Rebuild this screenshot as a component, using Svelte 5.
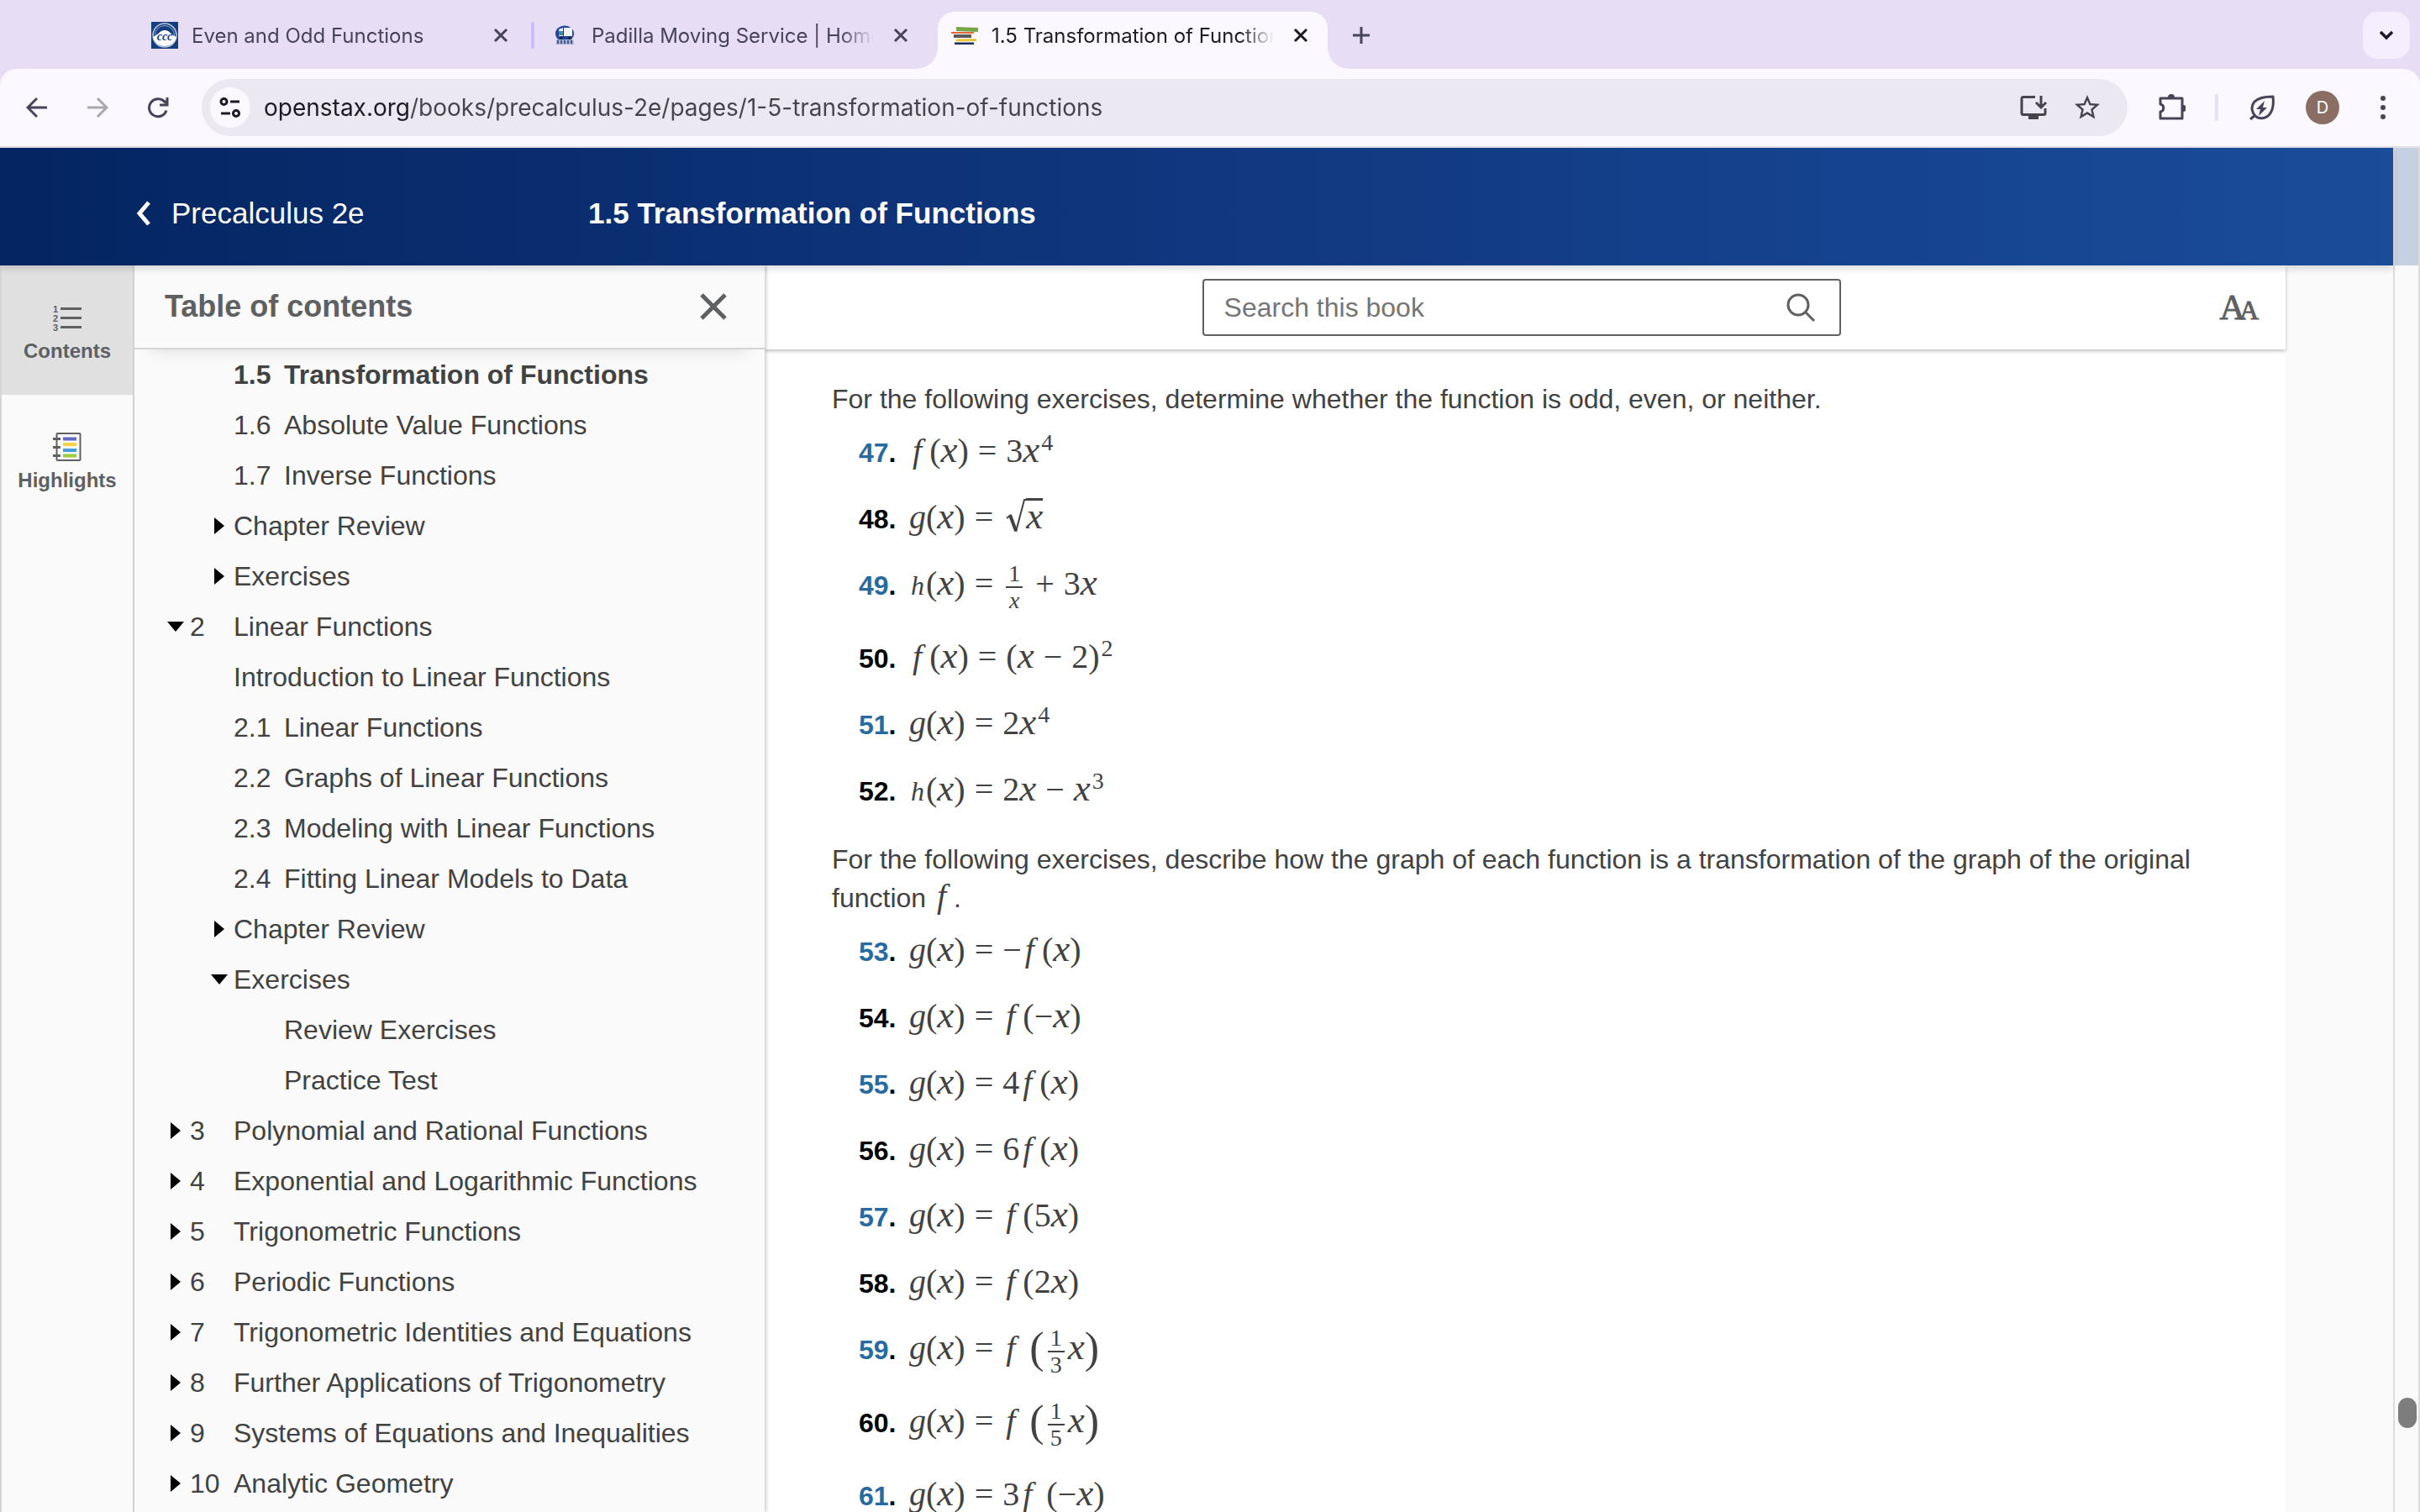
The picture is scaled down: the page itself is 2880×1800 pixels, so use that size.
<script lang="ts">
  interface TocRow {
    level: "chapter" | "section" | "group" | "leaf";
    title: string;
    num?: string;
    open?: boolean;
    current?: boolean;
  }

  interface Token {
    kind: "var" | "planck" | "x" | "fn" | "op" | "sup" | "frac" | "root" | "gap" | "big" | "text";
    a: string;
    b?: string;
  }

  const toc: TocRow[] = [
    { level: "section", num: "1.5", title: "Transformation of Functions", current: true },
    { level: "section", num: "1.6", title: "Absolute Value Functions" },
    { level: "section", num: "1.7", title: "Inverse Functions" },
    { level: "group", title: "Chapter Review" },
    { level: "group", title: "Exercises" },
    { level: "chapter", num: "2", title: "Linear Functions", open: true },
    { level: "section", title: "Introduction to Linear Functions" },
    { level: "section", num: "2.1", title: "Linear Functions" },
    { level: "section", num: "2.2", title: "Graphs of Linear Functions" },
    { level: "section", num: "2.3", title: "Modeling with Linear Functions" },
    { level: "section", num: "2.4", title: "Fitting Linear Models to Data" },
    { level: "group", title: "Chapter Review" },
    { level: "group", title: "Exercises", open: true },
    { level: "leaf", title: "Review Exercises" },
    { level: "leaf", title: "Practice Test" },
    { level: "chapter", num: "3", title: "Polynomial and Rational Functions" },
    { level: "chapter", num: "4", title: "Exponential and Logarithmic Functions" },
    { level: "chapter", num: "5", title: "Trigonometric Functions" },
    { level: "chapter", num: "6", title: "Periodic Functions" },
    { level: "chapter", num: "7", title: "Trigonometric Identities and Equations" },
    { level: "chapter", num: "8", title: "Further Applications of Trigonometry" },
    { level: "chapter", num: "9", title: "Systems of Equations and Inequalities" },
    { level: "chapter", num: "10", title: "Analytic Geometry" },
  ];

  // {a/b} fraction, √x root, ^n power, ~ thin gap, [ ] tall parentheses
  const parity = [
    { n: 47, math: "f(x) = 3x^4" },
    { n: 48, math: "g(x) = √x" },
    { n: 49, math: "h(x) = {1/x} + 3x" },
    { n: 50, math: "f(x) = (x − 2)^2" },
    { n: 51, math: "g(x) = 2x^4" },
    { n: 52, math: "h(x) = 2x − x^3" },
  ];

  const transforms = [
    { n: 53, math: "g(x) = −f(x)" },
    { n: 54, math: "g(x) = f(−x)" },
    { n: 55, math: "g(x) = 4f(x)" },
    { n: 56, math: "g(x) = 6f(x)" },
    { n: 57, math: "g(x) = f(5x)" },
    { n: 58, math: "g(x) = f(2x)" },
    { n: 59, math: "g(x) = f~[{1/3}x]" },
    { n: 60, math: "g(x) = f~[{1/5}x]" },
    { n: 61, math: "g(x) = 3f~(−x)" },
  ];

  function tokenize(src: string): Token[] {
    const out: Token[] = [];
    const re = /\{(\w)\/(\w)\}|√(\w)|\^(\w)|\s([=+−])\s|(.)/g;
    for (const m of src.matchAll(re)) {
      if (m[1]) out.push({ kind: "frac", a: m[1], b: m[2] });
      else if (m[3]) out.push({ kind: "root", a: m[3] });
      else if (m[4]) out.push({ kind: "sup", a: m[4] });
      else if (m[5]) out.push({ kind: "op", a: m[5] });
      else if (m[6] === "f") out.push({ kind: "fn", a: "f" });
      else if (m[6] === "x") out.push({ kind: "x", a: "x" });
      else if (m[6] === "g") out.push({ kind: "var", a: "g" });
      else if (m[6] === "h") out.push({ kind: "planck", a: "h" });
      else if (m[6] === "~") out.push({ kind: "gap", a: "" });
      else if (m[6] === "[") out.push({ kind: "big", a: "(" });
      else if (m[6] === "]") out.push({ kind: "big", a: ")" });
      else out.push({ kind: "text", a: m[6] });
    }
    return out;
  }

  let url = $state("openstax.org/books/precalculus-2e/pages/1-5-transformation-of-functions");
  let query = $state("");
</script>

{#snippet closeIcon()}
  <svg width="18" height="18" viewBox="0 0 18 18" fill="none" stroke="currentColor" stroke-width="3">
    <path d="M2 2l14 14M16 2L2 16" />
  </svg>
{/snippet}

{#snippet equation(src: string)}
  <span class="math">{#each tokenize(src) as t}{#if t.kind === "frac"}<span class="frac"><span class="num" class:it={t.a === "x"}>{t.a}</span><span class="den" class:it={t.b === "x"}>{t.b}</span></span>{:else if t.kind === "root"}<span class="root"><svg width="24" height="42" viewBox="0 0 24 42" fill="none" stroke="currentColor"><path d="M1 24l5-4" stroke-width="2" /><path d="M5 20l7 19" stroke-width="4" /><path d="M12 40L22 2h2" stroke-width="2" /></svg><span class="radicand">{t.a}</span></span>{:else}<span class={t.kind}>{t.a}</span>{/if}{/each}</span>
{/snippet}

{#snippet exercises(items: { n: number; math: string }[])}
  <ul class="exercises">
    {#each items as item (item.n)}
      <li>
        <span class="label">{#if item.n % 2}<a href="#ex-{item.n}">{item.n}</a>{:else}<b>{item.n}</b>{/if}<span>.</span></span>
        {@render equation(item.math)}
      </li>
    {/each}
  </ul>
{/snippet}

<div class="browser">
  <div class="tabstrip">
    <div class="tab">
      <svg class="favicon" width="32" height="32" viewBox="0 0 32 32">
        <rect width="32" height="32" fill="#153f7c" />
        <circle cx="16" cy="16" r="14" fill="none" stroke="#b9c8e0" stroke-width="1.5" />
        <circle cx="16" cy="16" r="11.5" fill="none" stroke="#8fa8cc" stroke-width="1" />
        <path d="M2 18c5-1 8-8 14-8s9 7 14 8c-2 7-7 11-14 11S4 25 2 18z" fill="#fff" />
        <text x="16" y="22" text-anchor="middle" font-family="Liberation Serif, serif" font-style="italic" font-weight="700" font-size="14" fill="#153f7c">ccc</text>
      </svg>
      <span class="tab-title">Even and Odd Functions</span>
      <button class="tab-close" aria-label="Close tab">{@render closeIcon()}</button>
    </div>
    <span class="tab-divider"></span>
    <div class="tab">
      <svg class="favicon" width="32" height="32" viewBox="0 0 32 32">
        <ellipse cx="16" cy="14" rx="11" ry="9.500" fill="#2344a0" />
        <path d="M9 9l5-2h11v10H9z" fill="#eef3f7" />
        <path d="M9 11h5v5H9z" fill="#3d8fa6" />
        <path d="M14.500 7v10" stroke="#23304f" stroke-width="1" />
        <circle cx="12" cy="19" r="2" fill="#1b2748" />
        <circle cx="22" cy="19" r="2" fill="#1b2748" />
        <path d="M6 21h20l1 6H6z" fill="#a3b0d0" />
        <path d="M8 22v4M12 22v4M16 22v4M20 22v4M24 22v4" stroke="#2d3c74" stroke-width="1.5" />
      </svg>
      <span class="tab-title">Padilla Moving Service | Home</span>
      <button class="tab-close" aria-label="Close tab">{@render closeIcon()}</button>
    </div>
    <span class="tab-divider hidden"></span>
    <div class="tab active">
      <svg class="favicon" width="32" height="32" viewBox="0 0 32 32">
        <path d="M6 6l26 1v5L6 11z" fill="#77a548" />
        <path d="M0 12h27v2H0z" fill="#e0693a" />
        <path d="M3 15h21v4H3z" fill="#5b5b5b" />
        <path d="M6 20.500l24-.5v3l-24 .5z" fill="#e9c53c" />
        <path d="M4 24.500h23v2.500H4z" fill="#1c2b5c" />
      </svg>
      <span class="tab-title">1.5 Transformation of Functions</span>
      <button class="tab-close" aria-label="Close tab">{@render closeIcon()}</button>
    </div>
    <button class="new-tab" aria-label="New tab">
      <svg width="20" height="20" viewBox="0 0 20 20" stroke="currentColor" stroke-width="3"><path d="M10 0v20M0 10h20" /></svg>
    </button>
    <button class="tab-search" aria-label="Search tabs">
      <svg width="18" height="12" viewBox="0 0 18 12" fill="none" stroke="currentColor" stroke-width="3.500"><path d="M2 2l7 7 7-7" /></svg>
    </button>
  </div>

  <div class="toolbar">
    <button class="tool" aria-label="Back">
      <svg width="26" height="26" viewBox="0 0 26 26" fill="none" stroke="currentColor" stroke-width="3"><path d="M25 13H3M13 2L2 13l11 11" /></svg>
    </button>
    <button class="tool muted" aria-label="Forward">
      <svg width="26" height="26" viewBox="0 0 26 26" fill="none" stroke="currentColor" stroke-width="3"><path d="M1 13h22M13 2l11 11-11 11" /></svg>
    </button>
    <button class="tool" aria-label="Reload">
      <svg width="26" height="26" viewBox="0 0 26 26" fill="none" stroke="currentColor" stroke-width="3"><path d="M23 16.500A10.500 10.500 0 1 1 21.500 7" /><path d="M24 1v9h-9" /><path d="M21 5l3 4" /></svg>
    </button>
    <div class="omnibox">
      <button class="site-info" aria-label="View site information">
        <svg width="26" height="26" viewBox="0 0 26 26" fill="none" stroke="currentColor" stroke-width="3">
          <circle cx="5.500" cy="6" r="3.500" /><path d="M13 6h11" /><circle cx="20" cy="20" r="3.500" /><path d="M2 20h11" />
        </svg>
      </button>
      <input class="url" type="text" aria-label="Address" bind:value={url} />
      <button class="in-bar" aria-label="Install app">
        <svg width="32" height="30" viewBox="0 0 32 30" fill="none" stroke="currentColor" stroke-width="3">
          <path d="M18 2.500H4Q2 2.500 2 4.500v17q0 2 2 2h24q2 0 2-2V16" />
          <path d="M10 23h12v6H10z" fill="currentColor" stroke="none" />
          <path d="M25 1v14M19 9l6 6 6-6" />
        </svg>
      </button>
      <button class="in-bar" aria-label="Bookmark this page">
        <svg width="36" height="36" viewBox="0 0 24 24" fill="currentColor">
          <path d="M22 9.240l-7.190-.62L12 2 9.190 8.630 2 9.240l5.460 4.730L5.820 21 12 17.270 18.180 21l-1.630-7.030L22 9.240zM12 15.400l-3.760 2.270 1-4.280-3.320-2.880 4.380-.38L12 6.100l1.710 4.040 4.380.38-3.320 2.880 1 4.280L12 15.400z" />
        </svg>
      </button>
    </div>
    <button class="tool" aria-label="Extensions">
      <svg width="34" height="34" viewBox="0 0 34 34" fill="none" stroke="currentColor" stroke-width="3" stroke-linejoin="round">
        <path d="M4 6h26v24H4v-8c5-1 5-8 0-9z" />
        <path d="M13 5a4 4 0 0 1 8 0zM31 14a4 4 0 0 1 0 8z" fill="currentColor" stroke="none" />
      </svg>
    </button>
    <span class="tool-divider"></span>
    <button class="tool" aria-label="Energy Saver">
      <svg width="32" height="32" viewBox="0 0 32 32" fill="none" stroke="currentColor" stroke-width="3" stroke-linejoin="round">
        <path d="M29 3c1 8 0 16-4 21-5 6-13 6-17 2S2 15 7 9c5-5 13-6 22-6z" />
        <path d="M2 30l6-5" />
        <path d="M19 8L9 18h5l-2 8 10-10h-5z" fill="currentColor" stroke="none" />
      </svg>
    </button>
    <button class="tool" aria-label="Profile"><span class="avatar">D</span></button>
    <button class="tool" aria-label="Menu">
      <svg width="6" height="28" viewBox="0 0 6 28" fill="currentColor"><circle cx="3" cy="3" r="3" /><circle cx="3" cy="14" r="3" /><circle cx="3" cy="25" r="3" /></svg>
    </button>
  </div>

  <div class="viewport">
    <div class="page">
      <header class="book-bar">
        <a class="book-link" href="#book">
          <svg width="18" height="30" viewBox="0 0 18 30" fill="none" stroke="currentColor" stroke-width="5"><path d="M15 2L4 15l11 13" /></svg>
          <span>Precalculus 2e</span>
        </a>
        <h1>1.5 Transformation of Functions</h1>
      </header>

      <div class="columns">
        <nav class="rail">
          <button class="rail-button selected">
            <svg width="36" height="36" viewBox="0 0 36 36">
              <g font-family="Liberation Sans, sans-serif" font-weight="700" font-size="11" fill="#5e6062">
                <text x="1" y="12">1</text><text x="1" y="23">2</text><text x="1" y="34">3</text>
              </g>
              <path d="M10 7.500h25M10 18.500h25M10 29.500h25" stroke="#5e6062" stroke-width="3" />
            </svg>
            Contents
          </button>
          <button class="rail-button">
            <svg width="36" height="36" viewBox="0 0 36 36" fill="none">
              <rect x="5.500" y="2" width="28" height="32" rx="1" stroke="#5e6062" stroke-width="2" />
              <path d="M1 8.500h9M1 18.500h9M1 28.500h9" stroke="#5e6062" stroke-width="3" />
              <path d="M13 8.500h16" stroke="#6468c4" stroke-width="4" />
              <path d="M13 15h16" stroke="#f5d342" stroke-width="4" />
              <path d="M13 22h16" stroke="#4a9bdc" stroke-width="4" />
              <path d="M13 28.500h16" stroke="#9dcc3a" stroke-width="4" />
            </svg>
            Highlights
          </button>
        </nav>

        <aside class="toc">
          <div class="toc-head">
            <h2>Table of contents</h2>
            <button class="toc-close" aria-label="Close table of contents">
              <svg width="32" height="32" viewBox="0 0 32 32" stroke="currentColor" stroke-width="5"><path d="M2 2l28 28M30 2L2 30" /></svg>
            </button>
          </div>
          <ol class="toc-list">
            {#each toc as row}
              <li class="toc-row {row.level}" class:current={row.current}>
                {#if row.level === "chapter" || row.level === "group"}
                  <span class="marker">
                    {#if row.open}
                      <svg width="20" height="12" viewBox="0 0 20 12"><path d="M0 0h20L10 12z" /></svg>
                    {:else}
                      <svg width="12" height="20" viewBox="0 0 12 20"><path d="M0 0l12 10L0 20z" /></svg>
                    {/if}
                  </span>
                {/if}
                <a href="#toc">
                  {#if row.num}<span class="toc-num">{row.num}</span>{/if}
                  <span>{row.title}</span>
                </a>
              </li>
            {/each}
          </ol>
        </aside>

        <main class="reader">
          <div class="reader-bar">
            <form class="search" onsubmit={(e) => e.preventDefault()}>
              <input type="text" placeholder="Search this book" aria-label="Search this book" bind:value={query} />
              <button type="submit" aria-label="Search">
                <svg width="36" height="36" viewBox="0 0 36 36" fill="none" stroke="currentColor" stroke-width="3"><circle cx="15" cy="15" r="12" /><path d="M24 24l10 10" /></svg>
              </button>
            </form>
            <button class="text-size" aria-label="Change text size"><span class="big-a">A</span><span class="small-a">A</span></button>
          </div>

          <article>
            <p>For the following exercises, determine whether the function is odd, even, or neither.</p>
            {@render exercises(parity)}
            <p>
              For the following exercises, describe how the graph of each function is a transformation of the graph of the original function <span class="math inline"><span class="fn">f</span></span>.
            </p>
            {@render exercises(transforms)}
          </article>
        </main>
      </div>
    </div>
    <div class="scrollbar"><div class="thumb"></div></div>
  </div>
</div>

<style>
  :global(body) {
    margin: 0;
  }

  .browser {
    display: flex;
    flex-direction: column;
    height: 100vh;
    overflow: hidden;
    background: #e7def6;
    color: #424242;
    font-family: "Liberation Sans", Arial, sans-serif;
    font-size: 32px;
  }

  button {
    display: flex;
    align-items: center;
    justify-content: center;
    padding: 0;
    border: none;
    background: none;
    color: inherit;
    font: inherit;
    cursor: pointer;
  }

  svg {
    display: block;
    flex: none;
  }

  a {
    color: inherit;
    text-decoration: none;
  }

  /* browser chrome */
  .tabstrip,
  .toolbar {
    display: flex;
    flex: none;
    font-family: Inter, "Liberation Sans", sans-serif;
    color: #474459;
  }

  .tabstrip {
    height: 68px;
    padding: 14px 12px 0 164px;
  }

  .tab {
    position: relative;
    display: flex;
    align-items: center;
    gap: 16px;
    box-sizing: border-box;
    flex: 0 1 464px;
    min-width: 0;
    height: 56px;
    padding: 0 16px;
    font-size: 24px;
  }

  .tab.active {
    height: 68px;
    padding-bottom: 12px;
    border-radius: 20px 20px 0 0;
    background: #fcf8ff;
    color: #1d1a26;
  }

  .tab.active::before,
  .tab.active::after {
    content: "";
    position: absolute;
    bottom: 0;
    width: 24px;
    height: 24px;
  }

  .tab.active::before {
    right: 100%;
    background: radial-gradient(circle at 0 0, transparent 23px, #fcf8ff 24px);
  }

  .tab.active::after {
    left: 100%;
    background: radial-gradient(circle at 100% 0, transparent 23px, #fcf8ff 24px);
  }

  .tab-title {
    flex: 1;
    overflow: hidden;
    white-space: nowrap;
    mask-image: linear-gradient(to right, #000 calc(100% - 40px), transparent);
  }

  .tab-close {
    width: 32px;
    height: 32px;
  }

  .tab-divider {
    flex: none;
    width: 4px;
    height: 32px;
    margin: 12px 4px;
    border-radius: 2px;
    background: #cabdfb;
  }

  .tab-divider.hidden {
    visibility: hidden;
  }

  .new-tab {
    width: 56px;
    height: 56px;
    margin-left: 12px;
  }

  .tab-search {
    width: 56px;
    height: 56px;
    margin-left: auto;
    border-radius: 18px;
    background: #f4eeff;
    color: #1d1a26;
  }

  .toolbar {
    align-items: center;
    height: 92px;
    padding: 0 16px;
    gap: 16px;
    border-bottom: 2px solid #e4e0e8;
    border-radius: 20px 20px 0 0;
    background: #fcf8ff;
  }

  .tool {
    flex: none;
    width: 56px;
    height: 56px;
  }

  .tool.muted {
    color: #aaa7b0;
  }

  .tool-divider {
    width: 4px;
    height: 32px;
    margin: 0 8px;
    border-radius: 2px;
    background: #e7defb;
  }

  .avatar {
    width: 40px;
    border-radius: 50%;
    background: #8a6e64;
    color: #fff;
    font-size: 20px;
    line-height: 40px;
  }

  .omnibox {
    display: flex;
    align-items: center;
    flex: 1;
    gap: 16px;
    height: 68px;
    margin: 0 8px;
    padding: 0 24px 0 10px;
    border-radius: 34px;
    background: #ebe8f1;
    color: #46434d;
  }

  .site-info {
    width: 48px;
    height: 48px;
    border-radius: 50%;
    background: #fcf8ff;
    color: #1d1a26;
  }

  /* host is darker than the path after it */
  .url {
    flex: 1;
    min-width: 0;
    padding: 0;
    border: none;
    outline: none;
    background: linear-gradient(to right, #1d1a20 174px, #46434d 174px);
    background-clip: text;
    color: transparent;
    caret-color: #1d1a20;
    font: inherit;
    font-size: 28px;
  }

  .in-bar {
    width: 48px;
    height: 48px;
  }

  /* page */
  .viewport {
    display: flex;
    flex: 1;
    min-height: 0;
  }

  .page {
    display: flex;
    flex-direction: column;
    flex: 1;
    min-width: 0;
    background: #fafafa;
  }

  .scrollbar {
    position: relative;
    flex: none;
    width: 28px;
    border: solid #dcdcdc;
    border-width: 0 2px;
    background: linear-gradient(#c5d0e3 140px, #fafafa 140px);
  }

  .thumb {
    position: absolute;
    bottom: 100px;
    left: 4px;
    width: 22px;
    height: 36px;
    border-radius: 11px;
    background: #7d7d7d;
  }

  .book-bar {
    position: relative;
    z-index: 3;
    display: flex;
    align-items: center;
    flex: none;
    box-sizing: border-box;
    height: 140px;
    padding: 16px 162px 0;
    background: linear-gradient(to right, #042561, #10377f 50%, #1a4c9a);
    box-shadow: 0 4px 8px rgba(0, 0, 0, 0.14);
    color: #fff;
    font-size: 35px;
  }

  .book-link {
    display: flex;
    align-items: center;
    gap: 24px;
    width: 538px;
  }

  h1 {
    margin: 0;
    font-size: 35px;
    font-weight: 700;
  }

  .columns {
    display: flex;
    flex: 1;
    min-height: 0;
  }

  .rail {
    flex: none;
    width: 156px;
    border: solid #d5d5d5;
    border-width: 0 2px;
  }

  .rail-button {
    flex-direction: column;
    justify-content: flex-start;
    gap: 8px;
    width: 100%;
    height: 154px;
    padding-top: 44px;
    color: #5e6062;
    font-size: 24px;
    font-weight: 700;
    line-height: 28px;
  }

  .rail-button.selected {
    background: #e0e0e0;
  }

  .toc {
    z-index: 2;
    display: flex;
    flex-direction: column;
    flex: none;
    width: 750px;
    background: #fafafa;
    box-shadow: 2px 0 4px rgba(0, 0, 0, 0.2);
  }

  .toc-head {
    display: flex;
    align-items: center;
    justify-content: space-between;
    flex: none;
    height: 98px;
    padding: 0 43px 0 36px;
    border-bottom: 2px solid #d5d5d5;
    box-shadow: 0 20px 20px -20px rgba(0, 0, 0, 0.14);
    color: #5e6062;
  }

  h2 {
    margin: 0;
    font-size: 36px;
    font-weight: 700;
  }

  .toc-close {
    width: 36px;
    height: 36px;
  }

  .toc-list {
    flex: 1;
    min-height: 0;
    margin: 0;
    padding: 0;
    overflow: hidden;
    list-style: none;
  }

  .toc-row {
    display: flex;
    align-items: center;
    height: 60px;
    white-space: nowrap;
  }

  .toc-row a {
    display: flex;
  }

  .toc-row.current {
    font-weight: 700;
  }

  .chapter {
    padding-left: 36px;
  }

  .section {
    padding-left: 118px;
  }

  .group {
    padding-left: 88px;
  }

  .leaf {
    padding-left: 178px;
  }

  .chapter .toc-num {
    width: 52px;
  }

  .section .toc-num {
    width: 60px;
  }

  .marker {
    display: flex;
    justify-content: center;
    width: 26px;
    margin-right: 4px;
    fill: #000;
  }

  .reader {
    display: flex;
    flex-direction: column;
    flex: 1;
    min-width: 0;
    margin-right: 128px;
    background: #fff;
  }

  .reader-bar {
    z-index: 1;
    display: flex;
    align-items: center;
    justify-content: flex-end;
    flex: none;
    height: 100px;
    padding-right: 32px;
    box-shadow: 0 2px 4px rgba(0, 0, 0, 0.25);
  }

  .search {
    display: flex;
    align-items: center;
    box-sizing: border-box;
    width: 760px;
    height: 68px;
    margin-right: 451px;
    padding: 0 28px 0 24px;
    border: 2px solid #5e6062;
    border-radius: 4px;
    color: #5e6062;
  }

  .search input {
    flex: 1;
    min-width: 0;
    padding: 0;
    border: none;
    outline: none;
    background: none;
    font: inherit;
  }

  .search input::placeholder {
    color: #757575;
    opacity: 1;
  }

  .text-size {
    align-items: baseline;
    color: #5e6062;
    font-family: "Liberation Serif", serif;
    -webkit-text-stroke: 1px;
  }

  .big-a {
    font-size: 42px;
  }

  .small-a {
    margin-left: -7px;
    font-size: 32px;
  }

  article {
    flex: 1;
    min-height: 0;
    padding: 36px 78px 0 80px;
    overflow: hidden;
  }

  p {
    margin: 0;
    line-height: 46px;
  }

  .exercises {
    margin: 0;
    padding: 12px 0 8px 32px;
    list-style: none;
  }

  .exercises li {
    display: flex;
    align-items: baseline;
    padding-bottom: 25px;
  }

  .label {
    width: 60px;
    color: #000;
    font-weight: 700;
  }

  .label a {
    color: #286aa0;
  }

  .math {
    font-family: "Liberation Serif", "Times New Roman", serif;
    font-size: 40px;
    line-height: 54px;
    white-space: nowrap;
  }

  .math.inline {
    line-height: 0;
  }

  .var,
  .fn,
  .planck,
  .x,
  .radicand,
  .it {
    font-style: italic;
  }

  .fn {
    margin: 0 9px 0 4px;
  }

  .planck {
    padding: 0 2px;
    font-size: 32px;
    line-height: 0;
  }

  .x,
  .radicand {
    font-size: 45px;
    line-height: 0;
  }

  .op {
    margin: 0 11px;
  }

  .gap {
    margin-left: 8px;
  }

  .sup {
    padding-left: 2px;
    font-size: 28px;
    line-height: 0;
    vertical-align: 14px;
  }

  .big {
    font-size: 52px;
    line-height: 0;
    vertical-align: -4px;
  }

  .frac {
    display: inline-flex;
    flex-direction: column;
    margin: 0 4px;
    font-size: 28px;
    line-height: 30px;
    text-align: center;
    vertical-align: middle;
  }

  .num {
    padding: 0 3px;
    border-bottom: 2px solid;
  }

  .root {
    display: inline-flex;
    align-items: baseline;
    margin-left: 4px;
    line-height: 0;
  }

  .root svg {
    align-self: center;
  }

  .radicand {
    border-top: 3px solid;
    line-height: 36px;
  }
</style>
